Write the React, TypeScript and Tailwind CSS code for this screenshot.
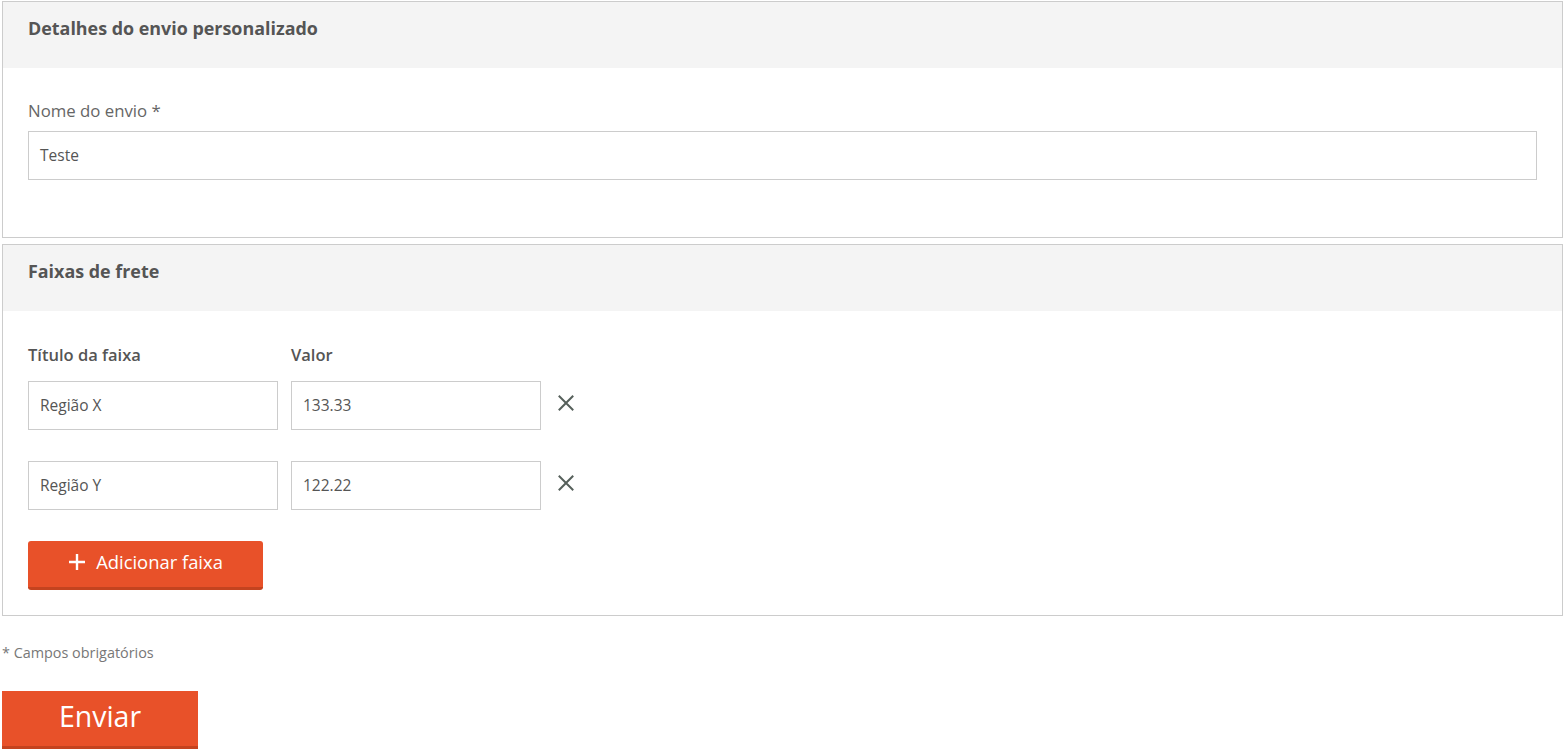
import React from "react";

const font = { fontFamily: '"Open Sans", "Noto Sans", sans-serif' };

function XIcon() {
  return (
    <svg width="16" height="16" viewBox="0 0 16 16" className="shrink-0">
      <path d="M1.5 1.5 L14.5 14.5 M14.5 1.5 L1.5 14.5" stroke="#56605b" strokeWidth="2" strokeLinecap="square" />
    </svg>
  );
}

function Row({ title, value }: { title: string; value: string }) {
  return (
    <div className="flex items-center">
      <div className="w-[250px] h-[49px] border border-[#cccccc] flex items-center px-[11px] text-[15.5px] text-[#555]">{title}</div>
      <div className="ml-[13px] w-[250px] h-[49px] border border-[#cccccc] flex items-center px-[11px] text-[15.5px] text-[#555]">{value}</div>
      <div className="ml-[17px] -mt-[6px]"><XIcon /></div>
    </div>
  );
}

export default function App() {
  return (
    <div className="bg-white w-[1564px] h-[749px] overflow-hidden pt-[1px]" style={font}>
      <div className="ml-[2px] w-[1561px] border border-[#cccccc]">
        <div className="h-[66px] bg-[#f4f4f4] flex items-center px-[25px] pb-[13px] text-[17.9px] font-bold text-[#555]">Detalhes do envio personalizado</div>
        <div className="px-[25px] pt-[32px] pb-[57px]">
          <div className="text-[16.8px] text-[#666] leading-[22px]">Nome do envio *</div>
          <div className="mt-[9px] h-[49px] border border-[#cccccc] flex items-center px-[11px] text-[15.5px] text-[#555]">Teste</div>
        </div>
      </div>
      <div className="ml-[2px] mt-[6px] w-[1561px] border border-[#cccccc]">
        <div className="h-[66px] bg-[#f4f4f4] flex items-center px-[25px] pb-[13px] text-[17.9px] font-bold text-[#555]">Faixas de frete</div>
        <div className="px-[25px] pt-[33px] pb-[25px]">
          <div className="flex text-[16.5px] font-semibold text-[#555] leading-[22px]">
            <div className="w-[263px]">Título da faixa</div>
            <div>Valor</div>
          </div>
          <div className="mt-[15px] flex flex-col gap-[31px]">
            <Row title="Região X" value="133.33" />
            <Row title="Região Y" value="122.22" />
          </div>
          <button className="mt-[31px] w-[235px] h-[49px] bg-[#e85129] border-b-[3px] border-[#c4431f] rounded-[3px] flex items-center justify-center gap-[10px] pb-[4px] text-white text-[18.4px]">
            <svg width="18" height="18" viewBox="0 0 18 18"><path d="M9 1 V17 M1 9 H17" stroke="white" strokeWidth="2.4" /></svg>
            <span>Adicionar faixa</span>
          </button>
        </div>
      </div>
      <div className="ml-[2px] mt-[27px] text-[14.4px] text-[#777] leading-[20px]">* Campos obrigatórios</div>
      <button className="ml-[2px] mt-[28px] w-[196px] h-[59px] bg-[#e85129] border-b-[4px] border-[#c4431f] flex items-center justify-center pb-[5px] text-white text-[28.5px]">Enviar</button>
    </div>
  );
}
